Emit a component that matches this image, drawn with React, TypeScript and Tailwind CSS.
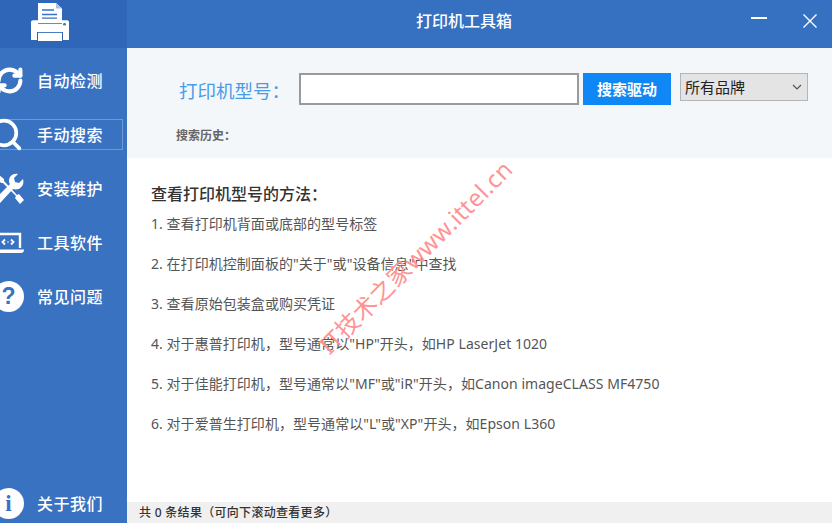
import { RefreshCw, Search } from "lucide-react";

const FONT = "font-['Noto_Sans','Noto_Sans_CJK_SC',sans-serif]";

const TIPS = [
  "1. 查看打印机背面或底部的型号标签",
  '2. 在打印机控制面板的"关于"或"设备信息"中查找',
  "3. 查看原始包装盒或购买凭证",
  '4. 对于惠普打印机，型号通常以"HP"开头，如HP LaserJet 1020',
  '5. 对于佳能打印机，型号通常以"MF"或"iR"开头，如Canon imageCLASS MF4750',
  '6. 对于爱普生打印机，型号通常以"L"或"XP"开头，如Epson L360',
];

function PrinterLogo() {
  return (
    <svg width="38" height="38" viewBox="0 0 38 42" preserveAspectRatio="none" fill="none">
      <path d="M7 0h18l6 6v16H7z" fill="#fff" />
      <path d="M25 0l6 6h-6z" fill="#a9c3e8" />
      <path d="M11 7h12v1.5H11zM11 12h15v1.5H11zM11 16h15v1.5H11z" fill="#3a72c2" />
      <path d="M2 19h5v4h24v-4h5a2 2 0 0 1 2 2v20H32V32H6v9H0V21a2 2 0 0 1 2-2z" fill="#fff" />
      <rect x="7" y="33" width="24" height="9" fill="#fff" />
      <circle cx="33.5" cy="23.5" r="1.5" fill="#3a72c2" />
    </svg>
  );
}

function ToolsIcon() {
  return (
    <svg width="28" height="31" viewBox="0 0 28 31" fill="#fff">
      <path d="M2 1l6 5v2l13 14 2-1 5 6-4 4-5-6 1-2L7 10H5L0 4z" />
      <path d="M27 6l-4 4-4-1-1-4 4-4c-5-1-9 2-9 7 0 1 0 2 1 3L1 24c-2 2-2 4-1 5s4 2 5 0l12-13c6 2 12-3 10-10z" />
    </svg>
  );
}

function LaptopIcon() {
  return (
    <svg width="27" height="22" viewBox="0 0 27 22" fill="none">
      <path d="M0 2h23V16" stroke="#fff" strokeWidth="2.4" />
      <path d="M0 17.5h27c0 2-1 3.5-3 3.5H0z" fill="#fff" />
      <path d="M8 7.5L5.5 10 8 12.5M14 7.5l2.5 2.5-2.5 2.5" stroke="#fff" strokeWidth="1.8" />
      <circle cx="11" cy="10" r="0.8" fill="#fff" />
    </svg>
  );
}

function BadgeIcon({ glyph, serif }: { glyph: string; serif?: boolean }) {
  return (
    <span
      className={`flex h-[31px] w-[31px] items-center justify-center rounded-full bg-white text-[23px] font-bold leading-none text-[#3a72c2] ${
        serif ? "font-['Liberation_Serif',serif]" : "font-['Liberation_Sans',sans-serif]"
      }`}
    >
      {glyph}
    </span>
  );
}

function NavItem({ icon, label, active }: { icon: React.ReactNode; label: string; active?: boolean }) {
  return (
    <div className={`flex h-[31px] items-center ${active ? "mr-1 border border-l-0 border-[#6d99d6]" : ""}`}>
      {/* icons run off the left edge of the window */}
      <div className="-ml-[10px] flex w-[47px] shrink-0 items-center justify-end pr-[13px]">
        <div className="shrink-0">{icon}</div>
      </div>
      <span className="text-[16px] font-medium leading-none tracking-[0.5px] text-white">{label}</span>
    </div>
  );
}

export default function App() {
  return (
    <div className={`flex h-[523px] w-[832px] overflow-hidden bg-white ${FONT}`}>
      <aside className="flex w-[127px] shrink-0 flex-col overflow-hidden bg-[#3a72c2] pb-[4px]">
        <div className="flex h-[48px] shrink-0 items-start overflow-hidden bg-[#2f66b8] pl-[31px] pt-[3px]">
          <PrinterLogo />
        </div>
        <div className="mt-[17px] flex flex-col gap-[23px]">
          <NavItem icon={<RefreshCw size={29} strokeWidth={3.4} color="#fff" />} label="自动检测" />
          <NavItem icon={<Search size={37} strokeWidth={2.4} color="#fff" />} label="手动搜索" active />
          <NavItem icon={<ToolsIcon />} label="安装维护" />
          <NavItem icon={<LaptopIcon />} label="工具软件" />
          <NavItem icon={<BadgeIcon glyph="?" />} label="常见问题" />
        </div>
        <div className="mt-auto">
          <NavItem icon={<BadgeIcon glyph="i" serif />} label="关于我们" />
        </div>
      </aside>

      <main className="relative flex min-w-0 flex-1 flex-col">
        <header className="flex h-[48px] shrink-0 items-center bg-[#3670c0] pb-[7px] pl-[289px]">
          <span className="text-[16px] font-medium text-white">打印机工具箱</span>
          <div className="ml-auto flex items-center gap-[36px] pr-[15px]">
            <span className="mb-[6px] h-[2px] w-[16px] bg-white" />
            <svg width="14" height="14" viewBox="0 0 14 14" stroke="#fff" strokeWidth="1.4">
              <path d="M0.5 0.5l13 13M13.5 0.5l-13 13" />
            </svg>
          </div>
        </header>

        <section className="h-[110px] shrink-0 bg-[#f3f7fa] pl-[52px]">
          <div className="flex items-start pt-[25px]">
            <span className="mt-[5px] w-[120px] whitespace-nowrap text-[18.5px] leading-[26px] text-[#4a9be8]">打印机型号：</span>
            <input className="h-[32px] w-[280px] border-2 border-[#9a9a9a] bg-white outline-none" />
            <button className="ml-[4px] h-[32px] w-[88px] bg-[#0f87f5] text-[15px] font-bold leading-none text-white">
              搜索驱动
            </button>
            <div className="ml-[9px] flex h-[28px] w-[128px] items-center justify-between border border-[#b5b5b5] bg-[#e4e4e4] pl-[4px] pr-[5px]">
              <span className="text-[15px] leading-none text-[#222]">所有品牌</span>
              <svg width="10" height="6" viewBox="0 0 10 6" fill="none" stroke="#555" strokeWidth="1.2">
                <path d="M1 1l4 4 4-4" />
              </svg>
            </div>
          </div>
          <p className="-ml-[3px] mt-[22px] text-[12px] font-bold leading-[18px] text-[#666]">搜索历史：</p>
        </section>

        <section className="flex-1 pl-[24px] pt-[24px]">
          <h2 className="mb-[8px] text-[16px] font-medium leading-[24px] text-[#333]">查看打印机型号的方法：</h2>
          <div className="flex flex-col gap-[20px]">
            {TIPS.map((t) => (
              <p key={t} className="text-[14px] leading-[20px] tracking-[0.05px] text-[#555]">
                {t}
              </p>
            ))}
          </div>
        </section>

        <footer className="flex h-[21px] shrink-0 items-center bg-[#f0f0f0] pl-[12px] text-[12px] font-medium tracking-[0.3px] text-[#333]">
          共 0 条结果（可向下滚动查看更多）
        </footer>

        {/* site watermark sits over the content */}
        <div className="pointer-events-none absolute left-[158px] top-[245px] origin-center -rotate-[45deg] whitespace-nowrap text-[24px] leading-none tracking-[0.3px] text-[#ff9494]">
          IT技术之家www.ittel.cn
        </div>
      </main>
    </div>
  );
}
